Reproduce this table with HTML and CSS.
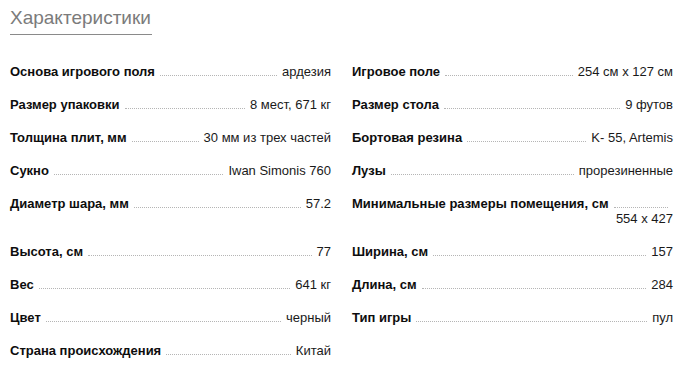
FILE: index.html
```html
<!DOCTYPE html>
<html lang="ru">
<head>
<meta charset="utf-8">
<link rel="stylesheet" href="styles.css">
</head>
<body>
<section class="specs">
  <h2 class="specs-title">Характеристики</h2>
  <div class="specs-grid">
    <div class="spec"><span class="spec-name">Основа игрового поля</span><span class="spec-dots"></span><span class="spec-value">ардезия</span></div>
    <div class="spec"><span class="spec-name">Игровое поле</span><span class="spec-dots"></span><span class="spec-value">254 см х 127 см</span></div>
    <div class="spec"><span class="spec-name">Размер упаковки</span><span class="spec-dots"></span><span class="spec-value">8 мест, 671 кг</span></div>
    <div class="spec"><span class="spec-name">Размер стола</span><span class="spec-dots"></span><span class="spec-value">9 футов</span></div>
    <div class="spec"><span class="spec-name">Толщина плит, мм</span><span class="spec-dots"></span><span class="spec-value">30 мм из трех частей</span></div>
    <div class="spec"><span class="spec-name">Бортовая резина</span><span class="spec-dots"></span><span class="spec-value">K- 55, Artemis</span></div>
    <div class="spec"><span class="spec-name">Сукно</span><span class="spec-dots"></span><span class="spec-value">Iwan Simonis 760</span></div>
    <div class="spec"><span class="spec-name">Лузы</span><span class="spec-dots"></span><span class="spec-value">прорезиненные</span></div>
    <div class="spec"><span class="spec-name">Диаметр шара, мм</span><span class="spec-dots"></span><span class="spec-value">57.2</span></div>
    <div class="spec"><span class="spec-name">Минимальные размеры помещения, см</span><span class="spec-dots"></span><span class="spec-value">554 x 427</span></div>
    <div class="spec"><span class="spec-name">Высота, см</span><span class="spec-dots"></span><span class="spec-value">77</span></div>
    <div class="spec"><span class="spec-name">Ширина, см</span><span class="spec-dots"></span><span class="spec-value">157</span></div>
    <div class="spec"><span class="spec-name">Вес</span><span class="spec-dots"></span><span class="spec-value">641 кг</span></div>
    <div class="spec"><span class="spec-name">Длина, см</span><span class="spec-dots"></span><span class="spec-value">284</span></div>
    <div class="spec"><span class="spec-name">Цвет</span><span class="spec-dots"></span><span class="spec-value">черный</span></div>
    <div class="spec"><span class="spec-name">Тип игры</span><span class="spec-dots"></span><span class="spec-value">пул</span></div>
    <div class="spec"><span class="spec-name">Страна происхождения</span><span class="spec-dots"></span><span class="spec-value">Китай</span></div>
  </div>
</section>
</body>
</html>
```
FILE: styles.css
```css
html, body {
  margin: 0;
  padding: 0;
  background: #ffffff;
}

body {
  font-family: "Liberation Sans", Arial, sans-serif;
  color: #111111;
}

.specs {
  width: 663px;
  padding: 7px 0 0 10px;
}

.specs-title {
  display: inline-block;
  margin: 0;
  padding: 0 1px 5px 0;
  font-size: 19px;
  line-height: 22px;
  font-weight: normal;
  color: #7b7b7b;
  border-bottom: 1px solid #8a8a8a;
}

.specs-grid {
  display: grid;
  grid-template-columns: 1fr 1fr;
  align-items: start;
  column-gap: 21px;
  margin-top: 20px;
}

.spec {
  display: flex;
  flex-wrap: wrap;
  align-items: flex-end;
  padding: 9px 0;
  font-size: 13px;
  line-height: 15px;
}

.spec-name {
  font-weight: bold;
  color: #0d0d0d;
}

.spec-dots {
  flex: 1 1 20px;
  min-width: 20px;
  margin: 0 5px 3px;
  border-bottom: 1px dotted #b5b5b5;
}

.spec-value {
  margin-left: auto;
  color: #1a1a1a;
}
```
